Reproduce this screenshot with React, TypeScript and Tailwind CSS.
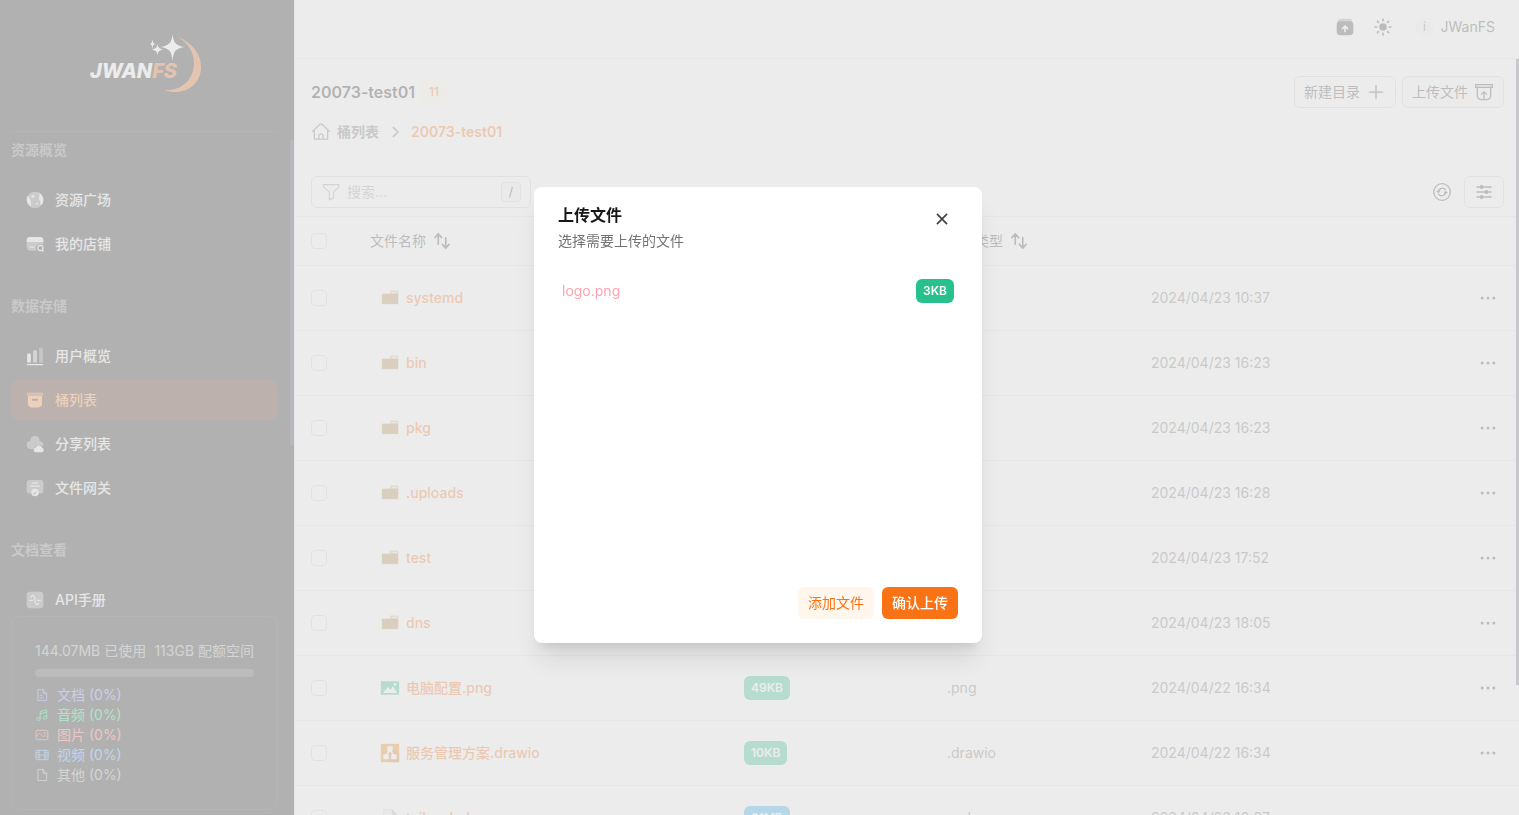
import type { ReactNode } from "react";
import clsx from "clsx";

type IconProps = { className?: string; children?: ReactNode };

function Icon({ className = "size-5", children }: IconProps) {
  return (
    <svg viewBox="0 0 24 24" fill="currentColor" className={clsx("shrink-0", className)} aria-hidden="true">
      {children}
    </svg>
  );
}

function LineIcon({ className = "size-5", children }: IconProps) {
  return (
    <svg
      viewBox="0 0 24 24"
      fill="none"
      stroke="currentColor"
      strokeWidth="1.5"
      strokeLinecap="round"
      strokeLinejoin="round"
      className={clsx("shrink-0", className)}
      aria-hidden="true"
    >
      {children}
    </svg>
  );
}

const GlobeIcon = () => (
  <Icon>
    <circle cx="12" cy="12" r="10" opacity="0.5" />
    <path d="M2 12c0-1.700.4-3.300 1.200-4.700 1.500.5 2.300 1.700 2.300 3.200 0 1.300 1.500 1.800 1.700 3.500.3 2-.8 3.200-.2 5.600A10 10 0 0 1 2 12ZM16 2.900A10 10 0 0 1 22 12c0 2.300-.8 4.400-2.100 6.100-1.500-.6-2-2.100-1.500-3.800.4-1.500-1.400-2.200-1.600-4.100-.3-2.300 1.200-2.900.7-4.500-.3-.900-1-1.600-1.500-2.800Z" />
    <circle cx="9.500" cy="7.500" r="1.800" />
    <circle cx="14.500" cy="16.500" r="1.200" />
  </Icon>
);

const ShopIcon = () => (
  <Icon>
    <path d="M2 9v6c0 3 1 5 4.500 5h7.500a4.500 4.500 0 0 1 8-5.500V9H2Z" opacity="0.5" />
    <path d="M6 3.500h12c2.800 0 4 1.400 4 4V9.500H2v-2c0-2.600 1.200-4 4-4ZM6 15h4.500a.75.75 0 0 1 0 1.500H6A.75.75 0 0 1 6 15Z" />
    <path
      fillRule="evenodd"
      d="M18.500 13a3.900 3.900 0 1 0 1.900 7.300l1 1a.9.9 0 0 0 1.200-1.200l-.9-.9A3.900 3.900 0 0 0 18.500 13Zm0 1.500a2.400 2.400 0 1 1 0 4.800 2.400 2.400 0 0 1 0-4.800Z"
    />
  </Icon>
);

const ChartIcon = () => (
  <Icon>
    <rect x="2.500" y="9" width="4.500" height="11" rx="1.700" />
    <rect x="9.750" y="5" width="4.500" height="15" rx="1.700" opacity="0.7" />
    <rect x="17" y="2" width="4.500" height="18" rx="1.700" opacity="0.4" />
    <rect x="2" y="21.500" width="20" height="1.500" rx="0.750" />
  </Icon>
);

const BucketIcon = () => (
  <Icon>
    <path d="M3 3h18a1.500 1.500 0 0 1 1 1.500v1A1.500 1.500 0 0 1 21 7H3a1.500 1.500 0 0 1-1-1.500v-1A1.500 1.500 0 0 1 3 3Z" opacity="0.5" />
    <path
      fillRule="evenodd"
      d="M3.500 7h17v7c0 5-1.500 7-6 7h-5c-4.500 0-6-2-6-7V7Zm6 3.500a1.200 1.200 0 0 0 0 2.500h5a1.200 1.200 0 0 0 0-2.500h-5Z"
    />
  </Icon>
);

const CloudIcon = () => (
  <Icon>
    <path d="M12 2a5.500 5.500 0 0 0-5.400 6.500A4.700 4.700 0 0 0 7 18h4a5 5 0 0 1 5-4.500 5 5 0 0 1 5.500 1.500 4.700 4.700 0 0 0-4.200-6.500A5.500 5.500 0 0 0 12 2Z" opacity="0.5" />
    <path d="M12.500 22h7.500a2.900 2.900 0 0 0 .7-5.600 4.300 4.300 0 0 0-8.200 0 2.900 2.900 0 0 0 0 5.600Z" />
  </Icon>
);

const GatewayIcon = () => (
  <Icon>
    <rect x="2" y="2.500" width="20" height="16" rx="3" opacity="0.5" />
    <rect x="8" y="5.500" width="8" height="1.500" rx="0.750" />
    <rect x="6" y="9" width="12" height="1.500" rx="0.750" />
    <path
      fillRule="evenodd"
      d="M12 13a4.500 4.500 0 1 0 0 9 4.500 4.500 0 0 0 0-9Zm2.300 3.900-2.600 2.500a.7.7 0 0 1-1 0l-1-1 1-1 .5.500 2.100-2 1 1Z"
    />
  </Icon>
);

const ApiIcon = () => (
  <Icon>
    <rect x="2" y="2" width="20" height="20" rx="4" opacity="0.5" />
    <path
      d="M5.500 12h1.500a2.700 2.700 0 0 1 5 0v0a2.700 2.700 0 0 0 5 0h1.500M7.500 9.500C8 7.300 8.700 6.500 9.700 6.500c3 0 1.600 11 4.600 11 1 0 1.700-.8 2.200-3"
      fill="none"
      stroke="none"
    />
    <path
      d="M5.500 12.300H9M15 12.300h3.500M7.500 8.500c.4-1.500 1.200-2.200 2.200-2.200 3 0 1.600 11.400 4.600 11.400 1 0 1.800-.7 2.200-2.200"
      fill="none"
      stroke="currentColor"
      strokeWidth="1.500"
      strokeLinecap="round"
    />
  </Icon>
);

const SortIcon = () => (
  <LineIcon>
    <path d="M7.500 16V4M3.500 8l4-4.500 4 4.500M16.500 8v12M12.500 16l4 4.500 4-4.500" strokeWidth="2" />
  </LineIcon>
);

const FolderIcon = () => (
  <Icon>
    <path d="M12 6V3.500a.5.500 0 0 1 .5-.5H21.500a.5.500 0 0 1 .5.500V19.500H2V7h9Z" opacity="0.6" />
    <path d="M14 4.700h6.500v1H14Z" fill="#fff" />
    <path d="M2.500 7H21.500v12H2.500Z" />
  </Icon>
);

const PictureIcon = () => (
  <Icon>
    <path
      fillRule="evenodd"
      d="M1 4h22v16H1ZM3.500 18h17l-5-8-3 4.500-2.500-4-6.500 7.500ZM18 6a1.700 1.700 0 1 0 0 3.400A1.700 1.700 0 0 0 18 6Z"
    />
  </Icon>
);

const DrawioIcon = () => (
  <Icon>
    <rect x="1" y="1" width="22" height="22" />
    <path d="m15 5 8 9v9H12l-8-5 7-6Z" fill="#d67612" />
    <path d="M12 8 7 16m5-8 5 8" stroke="#fff" strokeWidth="1.800" />
    <rect x="8.700" y="4" width="6.600" height="6" rx="1" fill="#fff" />
    <rect x="4" y="13.500" width="6.600" height="6" rx="1" fill="#fff" />
    <rect x="13.400" y="13.500" width="6.600" height="6" rx="1" fill="#fff" />
  </Icon>
);

const PlainFileIcon = () => (
  <Icon>
    <path d="M3.500 1.500h12l5.500 6V23H3.500Z" opacity="0.4" />
    <path d="M5 3h9v6h5.500v12.500H5Z" fill="#fff" opacity="0.6" />
    <path d="M14.500 1.500 21 8h-6.500Z" opacity="0.6" />
  </Icon>
);

const sections = [
  {
    title: "资源概览",
    items: [
      { label: "资源广场", icon: <GlobeIcon /> },
      { label: "我的店铺", icon: <ShopIcon /> },
    ],
  },
  {
    title: "数据存储",
    items: [
      { label: "用户概览", icon: <ChartIcon /> },
      { label: "桶列表", icon: <BucketIcon />, active: true },
      { label: "分享列表", icon: <CloudIcon /> },
      { label: "文件网关", icon: <GatewayIcon /> },
    ],
  },
  {
    title: "文档查看",
    items: [{ label: "API手册", icon: <ApiIcon /> }],
  },
];

const usage = [
  {
    label: "文档 (0%)",
    color: "text-indigo-400",
    icon: <path d="M13 2.500H5v19h15V9.500l-7-7Zm1 0V9h6M9 13h3M9 17h6" />,
  },
  {
    label: "音频 (0%)",
    color: "text-green-400",
    icon: (
      <>
        <path d="M9 18V6l11-3v13M9 10l11-3" />
        <circle cx="6" cy="18.500" r="3" />
        <circle cx="17" cy="16.500" r="3" />
      </>
    ),
  },
  {
    label: "图片 (0%)",
    color: "text-red-400",
    icon: (
      <>
        <rect x="2" y="4" width="20" height="16" rx="2" />
        <path d="m2 14 6-5 6 6 3-2.500 5 4" />
        <circle cx="16.500" cy="8.500" r="0.800" />
      </>
    ),
  },
  {
    label: "视频 (0%)",
    color: "text-blue-400",
    icon: (
      <>
        <rect x="1.500" y="4" width="21" height="16" rx="2" />
        <path d="M7 4v16M17 4v16M7 12h10M2 8h5M2 12h5M2 16h5M17 8h5M17 12h5M17 16h5" />
      </>
    ),
  },
  {
    label: "其他 (0%)",
    color: "text-neutral-400",
    icon: <path d="M13 2.500H5v19h15V9.500l-7-7Zm1 0V9h6" />,
  },
];

const files = [
  { name: "systemd", kind: "folder", date: "2024/04/23 10:37" },
  { name: "bin", kind: "folder", date: "2024/04/23 16:23" },
  { name: "pkg", kind: "folder", date: "2024/04/23 16:23" },
  { name: ".uploads", kind: "folder", date: "2024/04/23 16:28" },
  { name: "test", kind: "folder", date: "2024/04/23 17:52" },
  { name: "dns", kind: "folder", date: "2024/04/23 18:05" },
  { name: "电脑配置.png", kind: "image", size: "49KB", type: ".png", date: "2024/04/22 16:34" },
  { name: "服务管理方案.drawio", kind: "drawio", size: "10KB", type: ".drawio", date: "2024/04/22 16:34" },
  { name: "tailscaled", kind: "file", size: "31MB", type: ".apk", date: "2024/04/23 10:37" },
];

function FileIcon({ kind }: { kind: string }) {
  if (kind === "folder") return <span className="text-[#b88c4c]"><FolderIcon /></span>;
  if (kind === "image") return <span className="text-[#28c08c]"><PictureIcon /></span>;
  if (kind === "drawio") return <span className="text-[#f08705]"><DrawioIcon /></span>;
  return <span className="text-neutral-400"><PlainFileIcon /></span>;
}

function SizeBadge({ size }: { size: string }) {
  return (
    <span
      className={clsx(
        "inline-flex h-6 items-center rounded-md px-[7px] text-xs font-semibold text-white",
        size.endsWith("MB") ? "bg-[#26acf0]" : "bg-[#28c08c]"
      )}
    >
      {size}
    </span>
  );
}

function Logo() {
  return (
    <svg viewBox="0 0 116 62" className="h-[62px] w-[116px]" role="img" aria-label="JWANFS">
      <path
        d="M91 5C103 10 114 20 114 35c0 15-12 25-25 25-5 0-8-.500-11-2 17 1 29-11 29-27 0-11-6-20-16-26Z"
        fill="#e35c14"
      />
      <path d="M85.500 2c1 9 3 11.500 12 13-9 1.500-11 4-12 14-1-10-3-12.500-12-14 9-1.500 11-4 12-13Z" fill="#fff" />
      <path d="M70.500 11.500c.5 4 1.500 5.300 6 6-4.500.700-5.500 2-6 6-.5-4-1.500-5.300-6-6 4.500-.7 5.500-2 6-6Z" fill="#fff" />
      <path d="M65.500 7c.3 3 .8 4.500 2.500 5-1.700.5-2.200 2-2.500 5-.3-3-.8-4.500-2.500-5 1.700-.5 2.200-2 2.500-5Z" fill="#fff" />
      <text x="3" y="46" fontSize="20" fontWeight="800" fontStyle="italic" fill="#fff">
        JWAN<tspan fill="#e35c14">FS</tspan>
      </text>
    </svg>
  );
}

function Sidebar() {
  return (
    <aside className="relative flex w-[295px] shrink-0 flex-col border-r border-neutral-200 bg-neutral-900 pr-4 pb-[5px] pl-[11px]">
      <div className="flex h-[132px] shrink-0 items-center justify-center border-b border-neutral-800 pb-1.5">
        <Logo />
      </div>
      <nav className="min-h-0 flex-1 overflow-hidden">
        {sections.map((section) => (
          <div key={section.title} className="mb-6">
            <h2 className="flex h-9 items-center text-sm font-bold text-neutral-500">{section.title}</h2>
            <ul className="mt-3 space-y-1">
              {section.items.map((item) => (
                <li key={item.label}>
                  <a
                    href="#"
                    className={clsx(
                      "flex h-10 items-center gap-2.5 rounded-lg px-3.5 text-sm font-medium",
                      "active" in item ? "bg-[#431407] text-[#fb923c]" : "text-neutral-200"
                    )}
                  >
                    {item.icon}
                    {item.label}
                  </a>
                </li>
              ))}
            </ul>
          </div>
        ))}
      </nav>
      <div className="absolute top-[140px] right-0 h-[305px] w-1 bg-[#283040]" />

      <section className="shrink-0 rounded-lg border border-neutral-800 px-[23px] py-6 text-sm text-neutral-400">
        <div className="flex justify-between whitespace-nowrap">
          <span>144.07MB 已使用</span>
          <span>113GB 配额空间</span>
        </div>
        <div className="mt-2 mb-2 h-2 rounded-full bg-neutral-700" />
        <ul>
          {usage.map((row) => (
            <li key={row.label} className={clsx("flex items-center gap-2", row.color)}>
              <LineIcon className="size-3.5">{row.icon}</LineIcon>
              {row.label}
            </li>
          ))}
        </ul>
      </section>
    </aside>
  );
}

function Header() {
  return (
    <header className="flex h-[59px] shrink-0 items-center justify-end gap-3.5 border-b border-neutral-200 pr-6 pb-1 text-neutral-700">
      <button type="button" aria-label="上传" className="flex size-6 items-center justify-center">
        <Icon>
          <rect x="3" y="2" width="18" height="14" rx="4" opacity="0.5" />
          <rect x="2" y="5" width="20" height="17" rx="4.500" />
          <path d="M12 17.500v-5.500M9 14l3-3 3 3" fill="none" stroke="#fff" strokeWidth="2" strokeLinecap="round" strokeLinejoin="round" />
        </Icon>
      </button>
      <button type="button" aria-label="主题" className="flex size-6 items-center justify-center">
        <Icon>
          <circle cx="12" cy="12" r="4.500" />
          <path
            d="M12 2.500v2M12 19.500v2M2.500 12h2M19.500 12h2M5.300 5.300l1.200 1.200M17.500 17.500l1.200 1.200M5.300 18.700l1.200-1.200M17.500 6.500l1.200-1.200"
            stroke="currentColor"
            strokeWidth="2"
            strokeLinecap="round"
          />
        </Icon>
      </button>
      <button type="button" className="ml-1.5 flex items-center gap-1.5 text-sm">
        <span className="flex size-5 items-center justify-center rounded-full bg-neutral-100 text-xs text-neutral-500">
          i
        </span>
        JWanFS
      </button>
    </header>
  );
}

function Toolbar() {
  const outline = "flex h-8 items-center justify-center gap-1.5 rounded-md border border-neutral-300 text-sm text-neutral-700";
  return (
    <div className="pt-[17px] pr-[15px] pb-2 pl-4">
      <div className="flex items-center justify-between">
        <h1 className="flex items-center gap-1.5 font-semibold text-neutral-900">
          20073-test01
          <span className="rounded-md bg-amber-50 px-2 py-1 text-xs font-medium text-[#f97316]">11</span>
        </h1>
        <div className="flex gap-1.5">
          <button type="button" className={clsx(outline, "w-[102px]")}>
            新建目录
            <LineIcon>
              <path d="M12 4v16M4 12h16" />
            </LineIcon>
          </button>
          <button type="button" className={clsx(outline, "w-[102px] bg-neutral-50")}>
            上传文件
            <LineIcon>
              <path d="M2 3h20v3.500H2ZM4 7v9c0 3 1 5 4.500 5h7c3.500 0 4.500-2 4.500-5V7M12 20v-8M9 14.500l3-3 3 3" />
            </LineIcon>
          </button>
        </div>
      </div>

      <div className="mt-3.5 flex h-5 items-center gap-1.5 text-sm font-semibold text-neutral-500">
        <LineIcon>
          <path d="m1.500 11.500 9-8.500a2.200 2.200 0 0 1 3 0l9 8.500M4 9.500V20.500h16V9.500M9.500 20.500V16a1.500 1.500 0 0 1 1.500-1.500h2a1.500 1.500 0 0 1 1.500 1.500v4.500" />
        </LineIcon>
        <a href="#">桶列表</a>
        <LineIcon>
          <path d="m10 6.500 5.500 5.500-5.500 5.500" strokeWidth="2" />
        </LineIcon>
        <a href="#" className="text-[#f97316]">
          20073-test01
        </a>
      </div>

      <div className="mt-[34px] flex items-center justify-between">
        <label className="flex h-8 w-[220px] items-center gap-1.5 rounded-md border border-neutral-300 px-[9px] text-sm text-neutral-400">
          <LineIcon>
            <path d="M3 3h18.500v2.500c0 1-6 5-6.500 7.500v6L10 21.500V13c-.5-2.500-7-6.500-7-7.500Z" />
          </LineIcon>
          <input
            type="text"
            aria-label="搜索"
            placeholder="搜索..."
            className="min-w-0 flex-1 bg-transparent outline-none placeholder:text-neutral-400"
          />
          <kbd className="flex size-5 shrink-0 items-center justify-center rounded border border-neutral-300 bg-neutral-100 font-[inherit] text-xs text-neutral-900">
            /
          </kbd>
        </label>
        <div className="flex items-center gap-3">
          <button type="button" aria-label="刷新" className="text-neutral-700">
            <LineIcon>
              <circle cx="12" cy="12" r="10" />
              <path d="M7.500 11.500a4.700 4.700 0 0 1 8.500-2M16.500 12.500a4.700 4.700 0 0 1-8.500 2M6 11l1.500 1.500L9 11M15 13l1.500-1.500L18 13" />
            </LineIcon>
          </button>
          <button type="button" aria-label="列设置" className={clsx(outline, "w-10")}>
            <Icon>
              <path
                d="M3.500 6H6M11 6h9.500M3.500 12H13M18 12h2.500M3.500 18H6M11 18h9.500"
                stroke="currentColor"
                strokeWidth="1.800"
                strokeLinecap="round"
              />
              <circle cx="9" cy="6" r="2.500" />
              <circle cx="15" cy="12" r="2.500" />
              <circle cx="9" cy="18" r="2.500" />
            </Icon>
          </button>
        </div>
      </div>
    </div>
  );
}

function Checkbox({ label }: { label: string }) {
  return (
    <input
      type="checkbox"
      aria-label={label}
      className="block size-4 appearance-none rounded border border-neutral-300"
    />
  );
}

function FileTable() {
  return (
    <table className="w-full table-fixed border-t border-neutral-200 text-left text-sm">
      <colgroup>
        <col className="w-[59px]" />
        <col className="w-[374px]" />
        <col className="w-[203px]" />
        <col className="w-[204px]" />
        <col />
        <col className="w-14" />
      </colgroup>
      <thead>
        <tr className="h-[49px] border-b border-neutral-200 text-neutral-700">
          <th className="px-4">
            <Checkbox label="全选" />
          </th>
          <th className="px-4 font-normal">
            <button type="button" className="flex items-center gap-1.5">
              文件名称
              <SortIcon />
            </button>
          </th>
          <th />
          <th className="px-4 font-normal">
            <button type="button" className="flex items-center gap-1.5">
              文件类型
              <SortIcon />
            </button>
          </th>
          <th />
          <th />
        </tr>
      </thead>
      <tbody>
        {files.map((file) => (
          <tr key={file.name} className="h-[65px] border-b border-neutral-200 text-neutral-500">
            <td className="px-4">
              <Checkbox label={file.name} />
            </td>
            <td className="px-[26px]">
              <a href="#" className="flex items-center gap-1.5 font-medium text-[#f97316]">
                <FileIcon kind={file.kind} />
                {file.name}
              </a>
            </td>
            <td className="px-4">{file.size && <SizeBadge size={file.size} />}</td>
            <td className="px-4">{file.type}</td>
            <td className="px-4">{file.date}</td>
            <td>
              <button type="button" aria-label="更多" className="ml-[15px] block text-neutral-700">
                <Icon>
                  <circle cx="5" cy="12" r="1.800" />
                  <circle cx="12" cy="12" r="1.800" />
                  <circle cx="19" cy="12" r="1.800" />
                </Icon>
              </button>
            </td>
          </tr>
        ))}
      </tbody>
    </table>
  );
}

function UploadDialog() {
  return (
    <div className="fixed inset-0 z-10 flex items-center justify-center bg-[#e5e5e5]/75 pt-[15px] pr-[3px]">
      <div
        role="dialog"
        aria-modal="true"
        aria-labelledby="upload-title"
        className="flex w-full max-w-md flex-col rounded-lg bg-white px-6 pt-4 pb-6 shadow-xl"
      >
        <div className="flex items-start justify-between">
          <div>
            <h2 id="upload-title" className="text-base font-semibold text-neutral-900">
              上传文件
            </h2>
            <p className="mt-1 text-sm text-neutral-500">选择需要上传的文件</p>
          </div>
          <button type="button" aria-label="关闭" className="p-1.5 text-neutral-700">
            <LineIcon>
              <path d="m6.500 6.500 11 11M17.500 6.500l-11 11" strokeWidth="2" />
            </LineIcon>
          </button>
        </div>

        <ul className="mt-5 h-[316px] overflow-y-auto px-1 text-sm">
          <li className="flex h-10 items-center justify-between text-[#fda4af]">
            logo.png
            <SizeBadge size="3KB" />
          </li>
        </ul>

        <div className="flex justify-end gap-2 text-sm">
          <button type="button" className="h-8 rounded-md bg-orange-50 px-2.5 text-[#f97316]">
            添加文件
          </button>
          <button type="button" className="h-8 rounded-md bg-[#f97316] px-2.5 font-medium text-white">
            确认上传
          </button>
        </div>
      </div>
    </div>
  );
}

export default function App() {
  return (
    <div className="flex h-screen overflow-hidden bg-white font-['Inter','Noto_Sans_CJK_SC',sans-serif]">
      <Sidebar />
      <main className="flex min-w-0 flex-1 flex-col">
        <Header />
        <div className="relative min-h-0 flex-1 overflow-hidden">
          <Toolbar />
          <FileTable />
          <div className="absolute top-0 right-0 h-[626px] w-[3px] bg-[#68707e]" />
        </div>
      </main>
      <UploadDialog />
    </div>
  );
}
